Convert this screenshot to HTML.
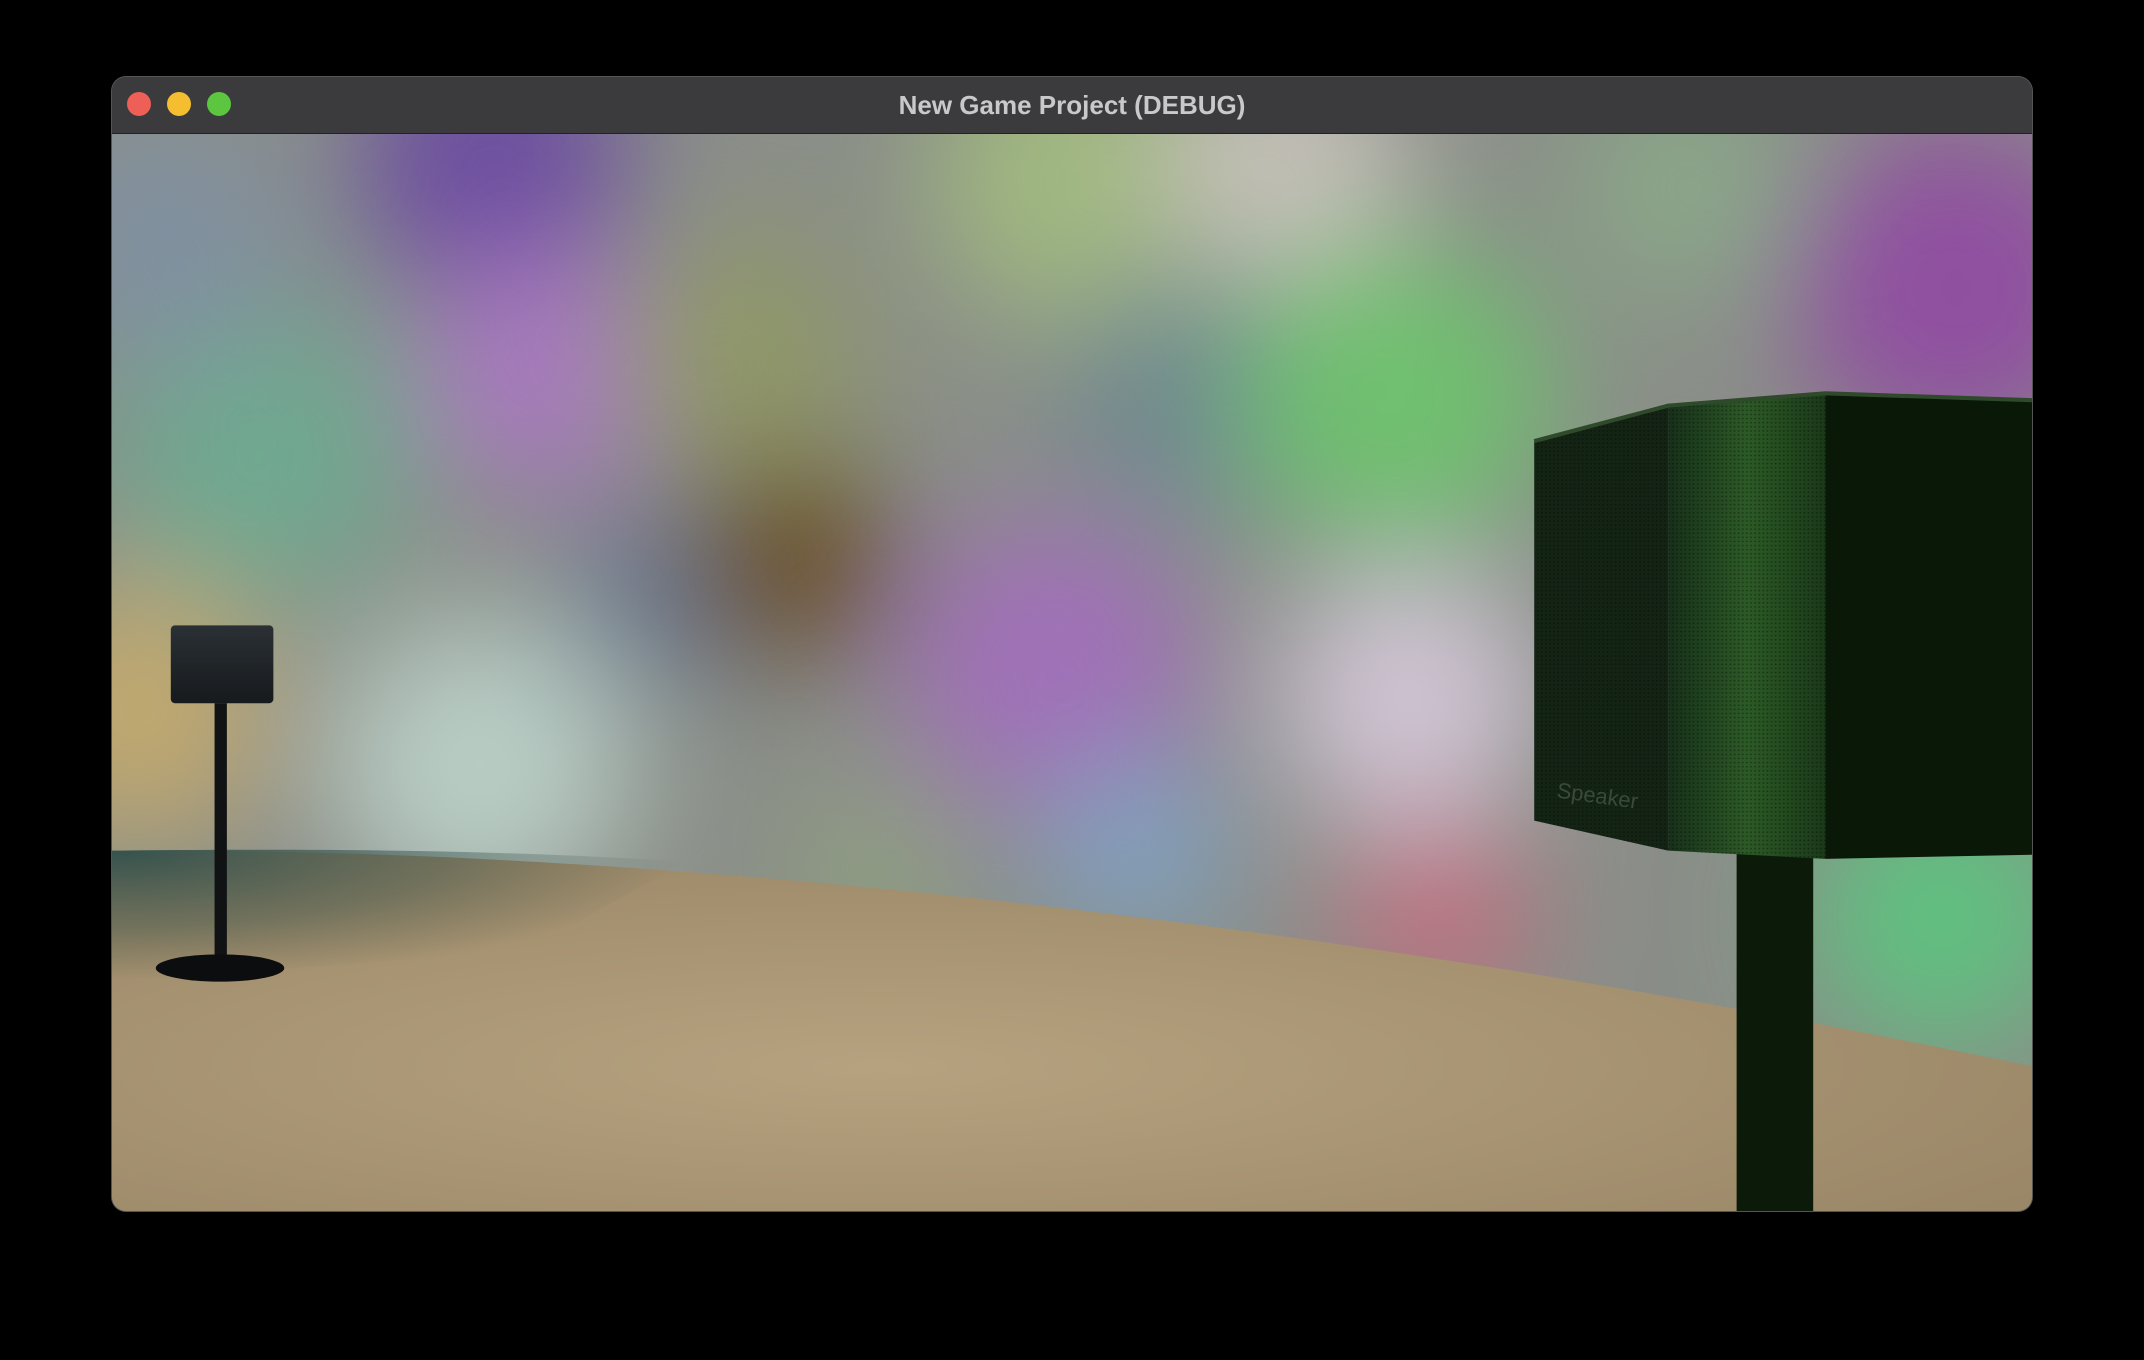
<!DOCTYPE html>
<html><head><meta charset="utf-8"><style>
html,body{margin:0;padding:0;background:#000;width:2144px;height:1360px;overflow:hidden}
.win{position:absolute;left:112px;top:77px;width:1920px;height:1134px;border-radius:14px;overflow:hidden;background:#3a3a3c;box-shadow:0 0 0 1px #555}
.bar{position:absolute;left:0;top:0;width:1920px;height:56px;background:#3b3b3d;border-bottom:1px solid #222}
.t{position:absolute;left:0;width:1920px;top:0;font:bold 26px "Liberation Sans",sans-serif;line-height:56px;text-align:center;color:#c9c9c9}
.d{position:absolute;top:92px;width:24px;height:24px;border-radius:50%}
</style></head><body>
<div class="win">
<div class="bar"><div class="t">New Game Project (DEBUG)</div></div>
</div>
<div class="d" style="left:127px;top:92px;background:#ee5f57;position:absolute"></div>
<div class="d" style="left:167px;top:92px;background:#f5be31;position:absolute"></div>
<div class="d" style="left:207px;top:92px;background:#5dc641;position:absolute"></div>
<svg style="position:absolute;left:112px;top:134px;border-radius:0 0 14px 14px" width="1920" height="1077" viewBox="0 0 1404 789" preserveAspectRatio="none">
<defs>
<filter id="b" x="-50%" y="-50%" width="200%" height="200%"><feGaussianBlur stdDeviation="45"/></filter>
<radialGradient id="fl" cx="0.4" cy="0.6" r="0.7"><stop offset="0" stop-color="#b6a27f"/><stop offset="1" stop-color="#9a8767"/></radialGradient>
<radialGradient id="tl" cx="0" cy="0" r="1"><stop offset="0" stop-color="#1b4548"/><stop offset="0.6" stop-color="#2e4a44" stop-opacity="0.5"/><stop offset="1" stop-color="#3a4a40" stop-opacity="0"/></radialGradient>
<linearGradient id="gf" x1="0" x2="1"><stop offset="0" stop-color="#17301a"/><stop offset="0.5" stop-color="#2c5a26"/><stop offset="1" stop-color="#1a3a18"/></linearGradient>
<linearGradient id="sb" x1="0" y1="0" x2="0" y2="1"><stop offset="0" stop-color="#2a3034"/><stop offset="1" stop-color="#161a1d"/></linearGradient>
<pattern id="mesh" width="3" height="3" patternUnits="userSpaceOnUse"><circle cx="1.5" cy="1.5" r="0.7" fill="#000" opacity="0.35"/></pattern>
</defs>
<rect width="1404" height="789" fill="#8a8e88"/>
<g filter="url(#b)">
<circle cx="108" cy="233" r="110" fill="#70a890"/>
<circle cx="40" cy="80" r="90" fill="#8090a0"/>
<circle cx="278" cy="23" r="100" fill="#6c4ea0"/>
<circle cx="318" cy="173" r="90" fill="#a878c0"/>
<circle cx="18" cy="423" r="100" fill="#c0a870"/>
<circle cx="268" cy="463" r="110" fill="#b8ccc4"/>
<circle cx="458" cy="163" r="90" fill="#909868"/>
<circle cx="400" cy="340" r="70" fill="#6a7890"/>
<circle cx="498" cy="313" r="75" fill="#6a5020"/>
<circle cx="708" cy="33" r="110" fill="#a0b880"/>
<circle cx="860" cy="20" r="90" fill="#c4c0b8"/>
<circle cx="688" cy="393" r="110" fill="#a070b8"/>
<circle cx="788" cy="193" r="90" fill="#708890"/>
<circle cx="938" cy="193" r="115" fill="#70c070"/>
<circle cx="948" cy="413" r="95" fill="#d0c4d4"/>
<circle cx="1348" cy="113" r="120" fill="#9050a0"/>
<circle cx="1150" cy="40" r="80" fill="#8aa888"/>
<circle cx="1338" cy="573" r="100" fill="#60c080"/>
<circle cx="968" cy="573" r="70" fill="#c07080"/>
<circle cx="748" cy="523" r="70" fill="#80a0c0"/>
<circle cx="560" cy="540" r="60" fill="#90a080"/>
</g>
<path d="M0 525 C 400 522, 900 578, 1404 683 L1404 789 L0 789 Z" fill="url(#fl)"/>
<path d="M0 525 C 200 523, 300 526, 420 533 L 300 600 L 0 620 Z" fill="url(#tl)" opacity="0.8"/>
<rect x="43" y="360" width="75" height="57" rx="3" fill="url(#sb)"/>
<rect x="75" y="417" width="9" height="188" fill="#101214"/>
<ellipse cx="79" cy="611" rx="47" ry="10" fill="#0c0d0e"/>
<rect x="1188" y="525" width="56" height="264" fill="#0b1a09"/>
<polygon points="1040,225 1138,199 1138,525 1040,503" fill="#142414"/>
<polygon points="1040,225 1138,199 1138,525 1040,503" fill="url(#mesh)"/>
<polygon points="1138,199 1253,190 1253,531 1138,525" fill="url(#gf)"/>
<polygon points="1138,199 1253,190 1253,531 1138,525" fill="url(#mesh)"/>
<polygon points="1253,190 1404,195 1404,528 1253,531" fill="#0a1808"/>
<polyline points="1040,225 1138,199 1253,190 1404,195" fill="none" stroke="#2e4a2a" stroke-width="3"/>
<text x="1056" y="486" transform="rotate(8 1056 486)" font-family="Liberation Sans,sans-serif" font-size="16" fill="#3a4a38">Speaker</text>
</svg>
</body></html>
